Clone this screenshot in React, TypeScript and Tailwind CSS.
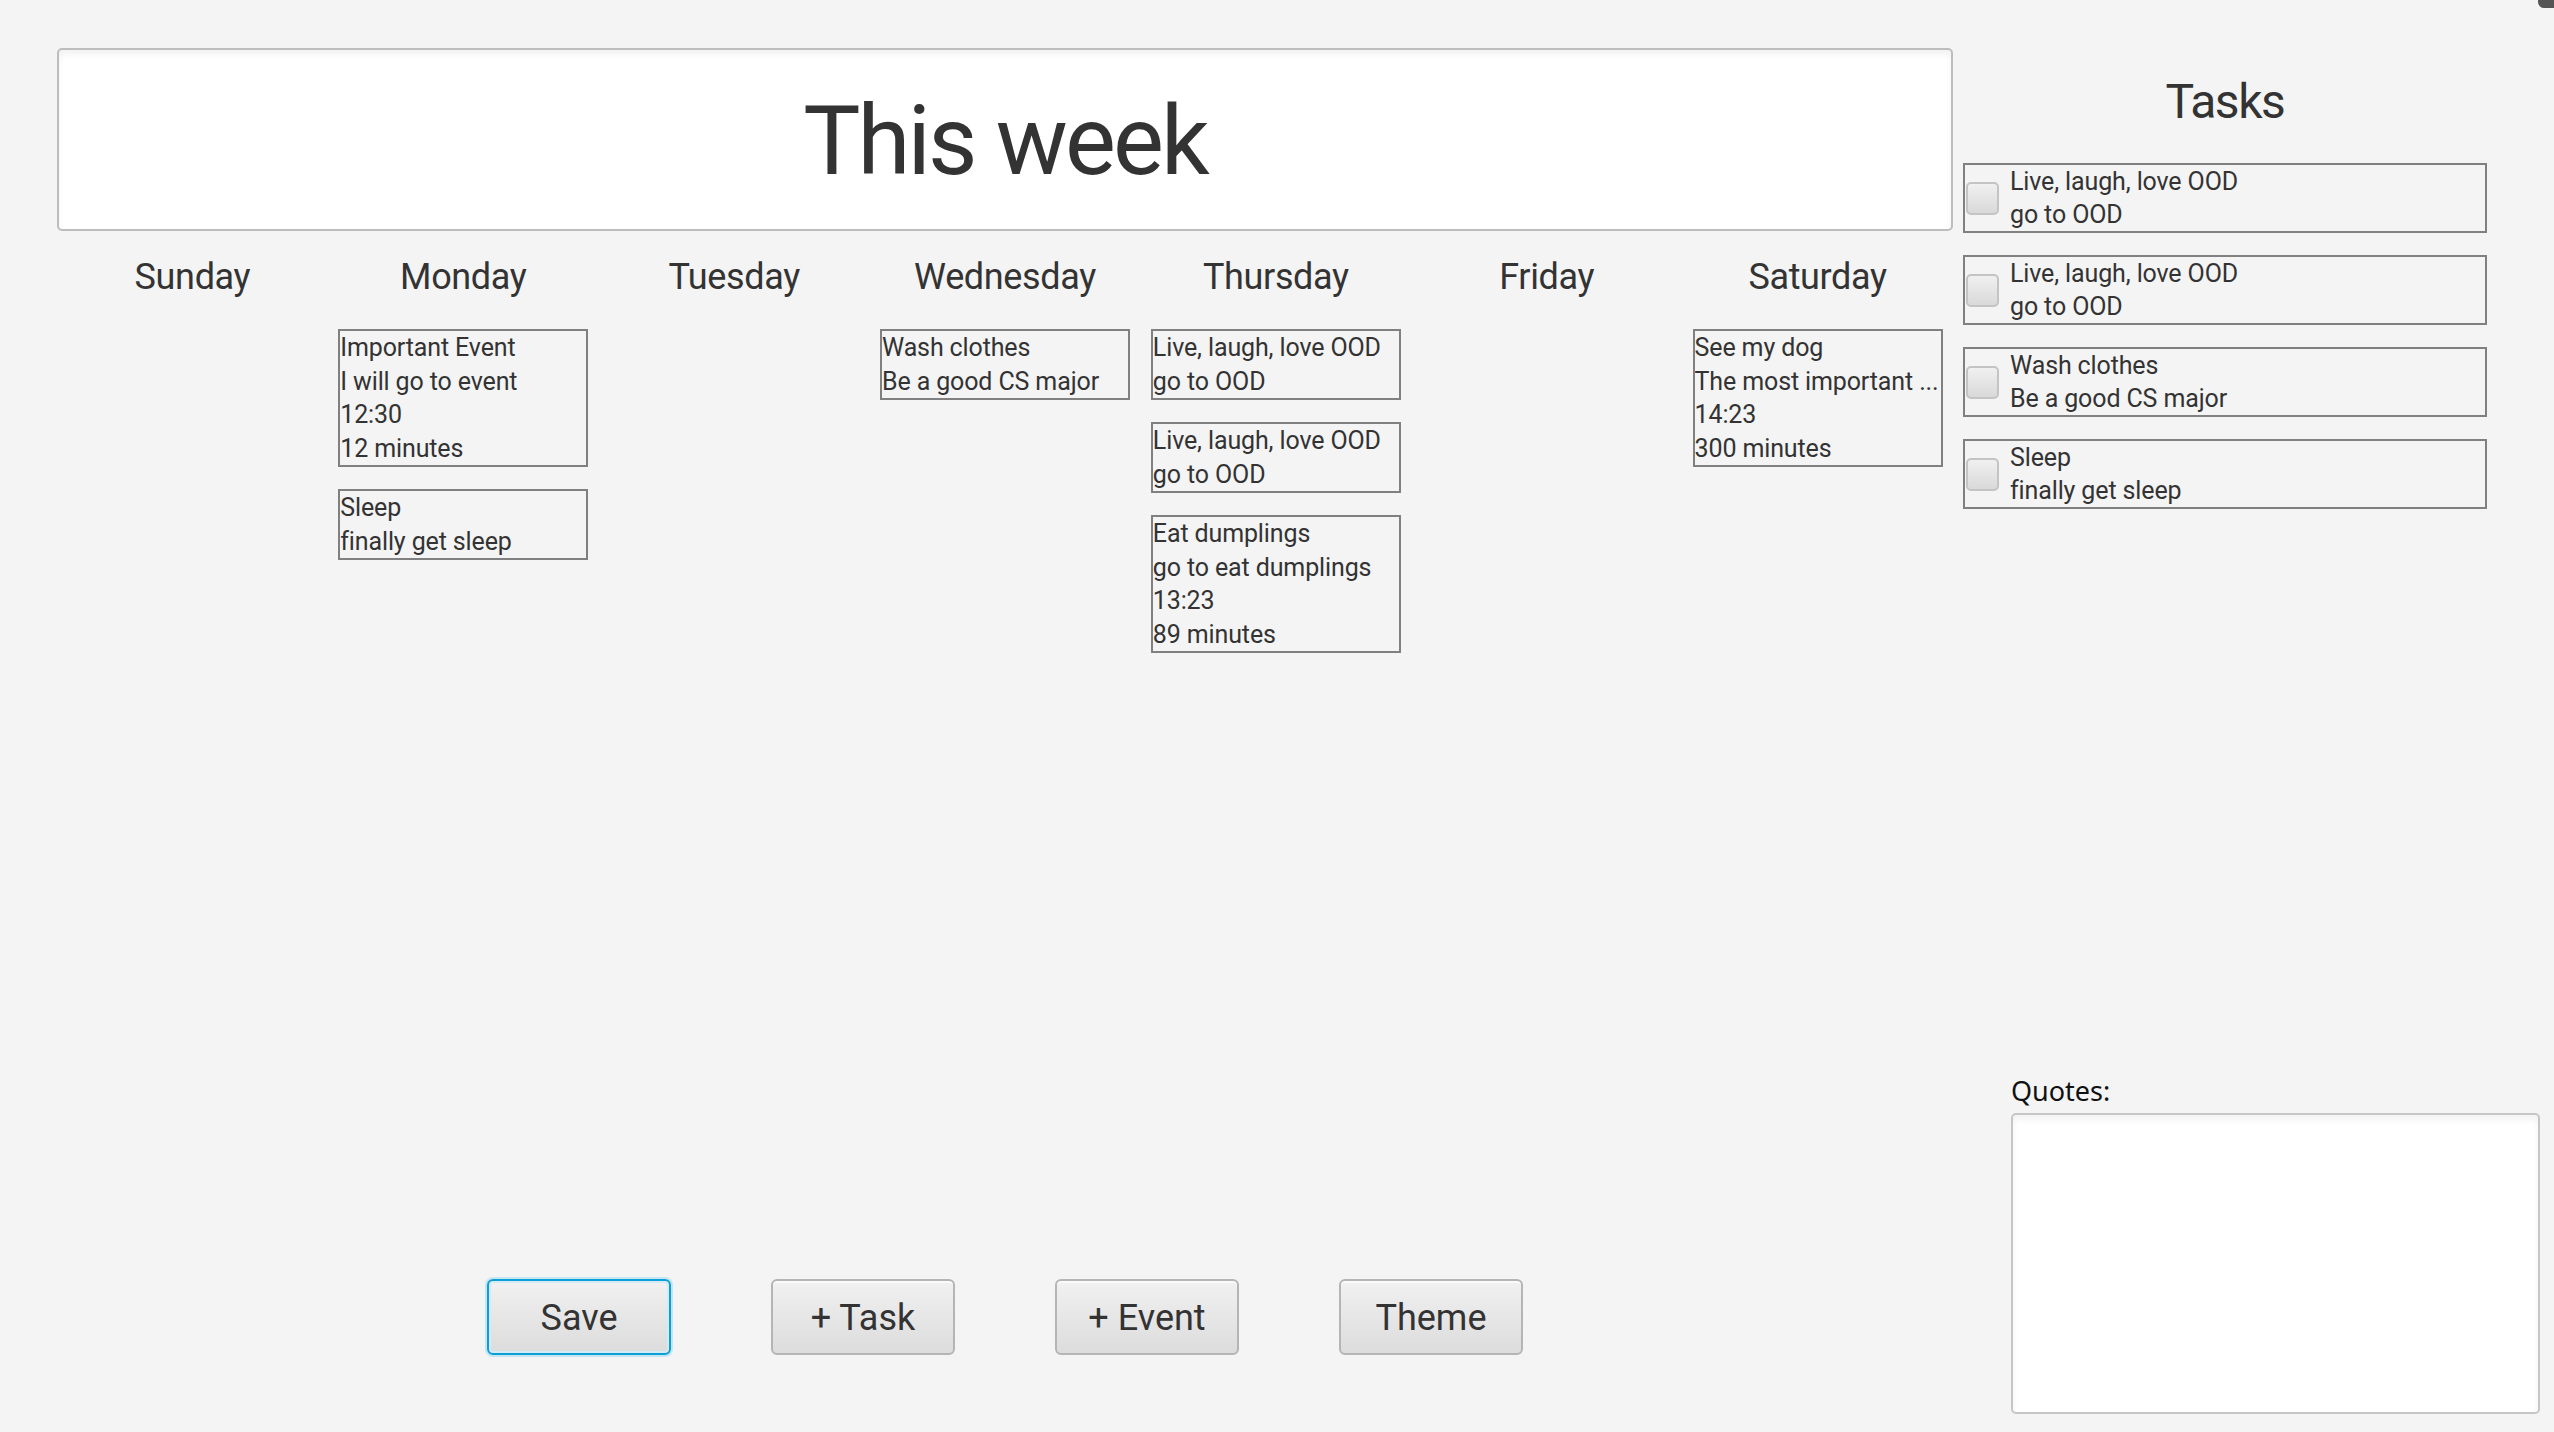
import React from 'react';

type CalEvent = { lines: string[] };

const DAYS: { name: string; items: CalEvent[] }[] = [
  { name: 'Sunday', items: [] },
  {
    name: 'Monday',
    items: [
      { lines: ['Important Event', 'I will go to event', '12:30', '12 minutes'] },
      { lines: ['Sleep', 'finally get sleep'] },
    ],
  },
  { name: 'Tuesday', items: [] },
  { name: 'Wednesday', items: [{ lines: ['Wash clothes', 'Be a good CS major'] }] },
  {
    name: 'Thursday',
    items: [
      { lines: ['Live, laugh, love OOD', 'go to OOD'] },
      { lines: ['Live, laugh, love OOD', 'go to OOD'] },
      { lines: ['Eat dumplings', 'go to eat dumplings', '13:23', '89 minutes'] },
    ],
  },
  { name: 'Friday', items: [] },
  {
    name: 'Saturday',
    items: [{ lines: ['See my dog', 'The most important ...', '14:23', '300 minutes'] }],
  },
];

const TASKS = [
  ['Live, laugh, love OOD', 'go to OOD'],
  ['Live, laugh, love OOD', 'go to OOD'],
  ['Wash clothes', 'Be a good CS major'],
  ['Sleep', 'finally get sleep'],
];

const BUTTONS = ['Save', '+ Task', '+ Event', 'Theme'];

// the little item card shown under each day
const EventCard = ({ item }: { item: CalEvent }) => (
  <div className="w-[250px] border-2 border-[#808080] text-[25px] leading-[33.5px] tracking-[-0.005em] text-[#333] whitespace-nowrap overflow-hidden">
    {item.lines.map((line, i) => (
      <div key={i}>{line}</div>
    ))}
  </div>
);

const TaskRow = ({ lines }: { lines: string[] }) => (
  <div className="w-[524px] border-2 border-[#808080] flex items-center">
    <div className="ml-px w-[33px] h-[33px] rounded-[5px] border-2 border-[#c4c4c4] bg-gradient-to-b from-[#f0f0f0] to-[#d9d9d9]" />
    <div className="ml-[11px] text-[25px] leading-[33px] tracking-[-0.005em] text-[#333]">
      {lines.map((line, i) => (
        <div key={i}>{line}</div>
      ))}
    </div>
  </div>
);

export default function App() {
  return (
    <div
      className="relative w-[2554px] h-[1432px] bg-[#f4f4f4] flex overflow-hidden"
      style={{ fontFamily: 'Roboto, "Liberation Sans", sans-serif' }}
    >
      {/* window corner */}
      <div className="absolute right-0 top-0 w-[16px] h-[8px] bg-[#555] rounded-bl-[6px]" />

      {/* week view */}
      <div className="ml-[57px] mt-[48px] w-[1896px] flex flex-col">
        <div className="h-[183px] bg-white border-2 border-[#bdbdbd] rounded-[5px] shadow-[inset_0_4px_6px_rgba(0,0,0,0.06)] flex items-center justify-center">
          <span className="text-[96px] leading-none tracking-[-0.03em] text-[#333] pt-[2px]">This week</span>
        </div>

        <div className="flex-1 grid grid-cols-7 mt-[24px]">
          {DAYS.map((day) => (
            <div key={day.name} className="flex flex-col items-center">
              <div className="text-[36px] leading-[44px] tracking-[-0.01em] text-[#333]">{day.name}</div>
              <div className="mt-[30px] flex flex-col gap-[22px]">
                {day.items.map((item, i) => (
                  <EventCard key={i} item={item} />
                ))}
              </div>
            </div>
          ))}
        </div>

        <div className="mb-[77px] flex justify-center gap-[100px]">
          {BUTTONS.map((label, i) => (
            <button
              key={label}
              className={
                i === 0
                  ? 'w-[184px] h-[76px] pt-[2px] rounded-[6px] border-2 border-[#0b9fd6] shadow-[0_0_0_2px_#c3e5f4,inset_0_0_0_2px_#d4ebf6] bg-gradient-to-b from-[#f1f1f1] to-[#dcdcdc] text-[36px] text-[#333]'
                  : 'w-[184px] h-[76px] pt-[2px] rounded-[6px] border-2 border-[#b5b5b5] shadow-[inset_0_2px_0_#fafafa] bg-gradient-to-b from-[#f1f1f1] to-[#dcdcdc] text-[36px] text-[#333]'
              }
            >
              {label}
            </button>
          ))}
        </div>
      </div>

      {/* tasks + quotes */}
      <div className="ml-[10px] w-[577px] flex flex-col">
        <div className="mt-[74px] w-[524px] text-center text-[48px] leading-[56px] tracking-[-0.03em] text-[#333]">Tasks</div>
        <div className="mt-[33px] flex flex-col gap-[22px]">
          {TASKS.map((t, i) => (
            <TaskRow key={i} lines={t} />
          ))}
        </div>

        <div className="mt-auto mb-[18px] ml-[48px] flex flex-col">
          <div
            className="text-[27px] leading-[36px] text-[#111]"
            style={{ fontFamily: '"Noto Sans", "Open Sans", sans-serif' }}
          >
            Quotes:
          </div>
          <div className="mt-[4px] w-[529px] h-[301px] bg-white border-2 border-[#c6c6c6] rounded-[5px] shadow-[inset_0_5px_6px_rgba(0,0,0,0.05)]" />
        </div>
      </div>
    </div>
  );
}
